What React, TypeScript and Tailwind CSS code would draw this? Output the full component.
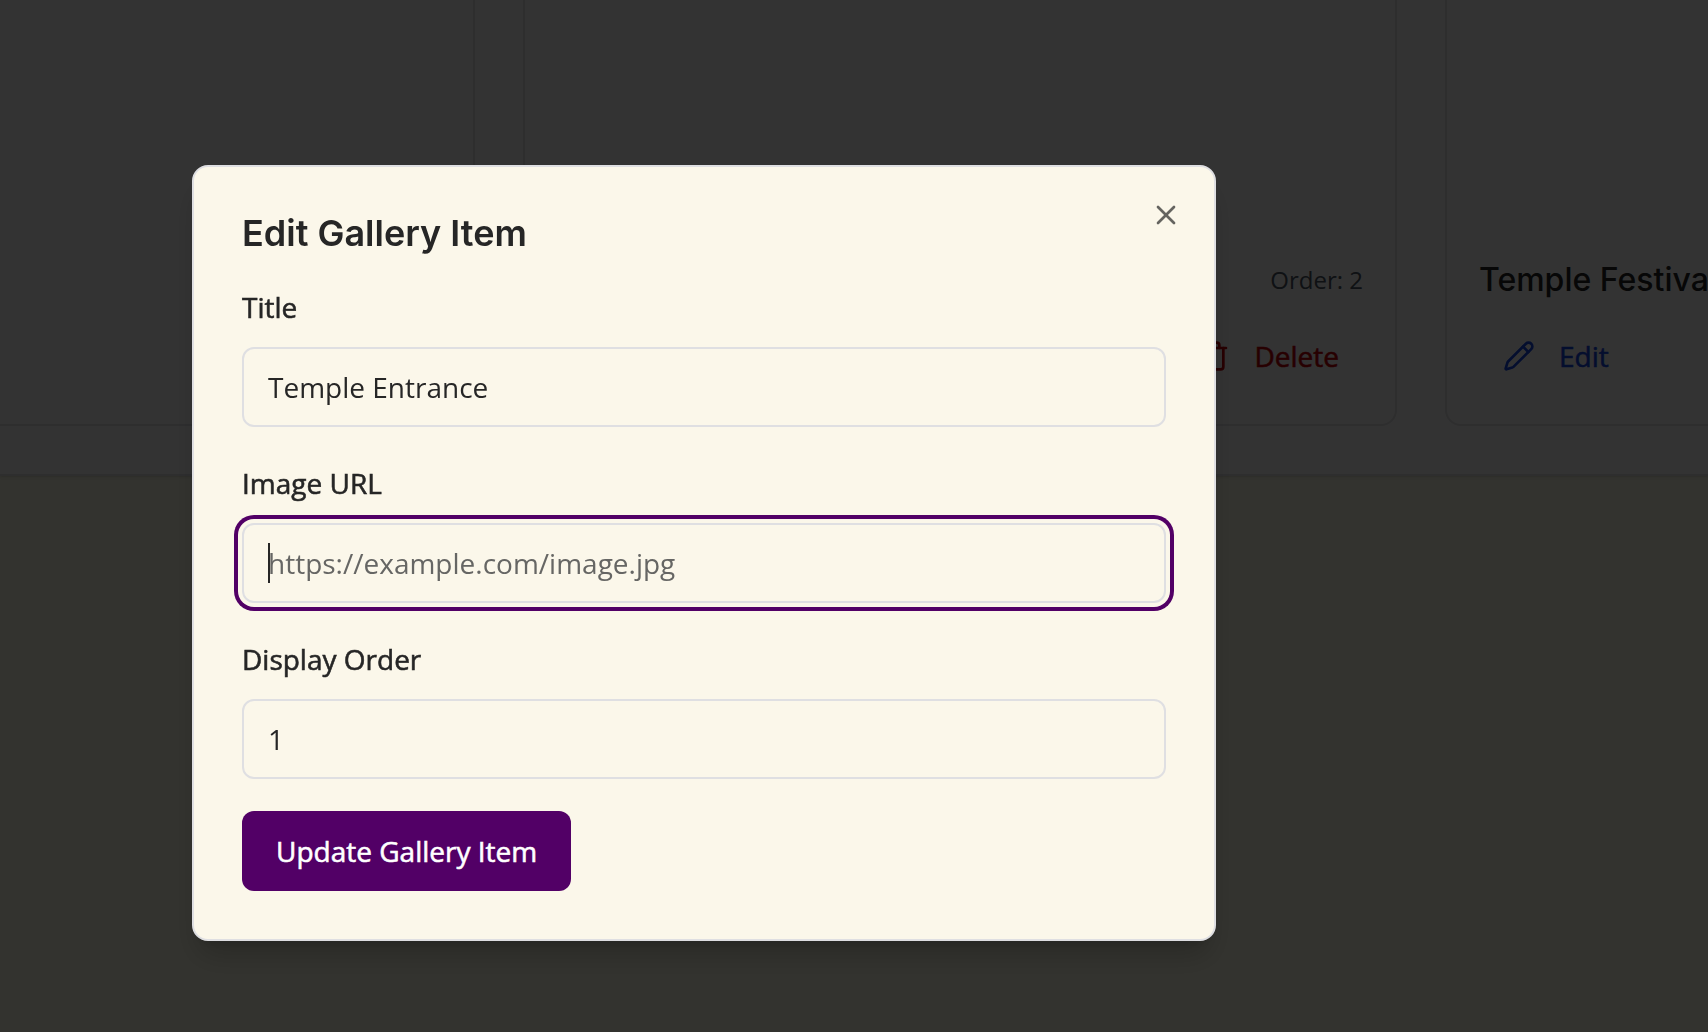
import { useState } from "react";
import { Pencil, Trash, X } from "lucide-react";

type GalleryItem = { title: string; order: number };

const items: GalleryItem[] = [
  { title: "Temple Entrance", order: 1 },
  { title: "Main Deity", order: 2 },
  { title: "Temple Festival", order: 3 },
];

const inputClass =
  "block h-20 w-full rounded-xl border-2 border-[#dfdfe2] bg-[#fbf7ea] px-6 text-[28px] leading-10 text-[#262626] placeholder:text-[#666664] outline-none focus:ring-4 focus:ring-[#520066] focus:ring-offset-4 focus:ring-offset-[#fbf7ea]";

const mediumText = "text-[28px] font-medium [-webkit-text-stroke:0.02em_currentColor]";

const labelClass = `flex h-12 items-center leading-7 ${mediumText}`;

const cardButtonClass = `flex h-[72px] items-center gap-6 rounded-xl px-6 ${mediumText}`;

function GalleryCard({ item }: { item: GalleryItem }) {
  return (
    <article className="min-w-0 overflow-hidden rounded-2xl border-2 border-[#e4e4e7] bg-white">
      <div className="h-[238px]" />
      <div className="p-8">
        <div className="mb-4 flex items-center justify-between">
          <h3 className="font-['Inter',sans-serif] text-[32px] leading-[48px] font-medium text-[#262626]">
            {item.title}
          </h3>
          <span className="text-[24px] leading-8 text-[#4b5563]">Order: {item.order}</span>
        </div>
        <div className="flex justify-between">
          <button type="button" className={`${cardButtonClass} text-blue-700`}>
            <Pencil size={32} />
            Edit
          </button>
          <button type="button" className={`${cardButtonClass} text-red-700`}>
            <Trash size={32} />
            Delete
          </button>
        </div>
      </div>
    </article>
  );
}

export default function App() {
  const [title, setTitle] = useState("Temple Entrance");
  const [url, setUrl] = useState("");
  const [order, setOrder] = useState("1");

  return (
    <div className="min-h-screen overflow-hidden bg-[#fcfce8] font-['Open_Sans',sans-serif] text-[#262626]">
      <section className="border-b-2 border-[#e4e4e7] bg-white pb-12 shadow-sm">
        <div className="-mt-4 -mr-[611px] -ml-[399px] grid grid-cols-3 gap-12">
          {items.map((item) => (
            <GalleryCard key={item.order} item={item} />
          ))}
        </div>
      </section>

      <div className="fixed inset-0 flex items-center justify-center bg-black/80 pt-[73px] pr-[300px]">
        <div
          role="dialog"
          aria-modal="true"
          aria-labelledby="dialog-title"
          className="relative w-full max-w-5xl rounded-2xl border-2 border-[#dfdfe2] bg-[#fbf7ea] p-12 shadow-[0_20px_30px_-6px_rgb(0_0_0/0.2),0_8px_12px_-8px_rgb(0_0_0/0.2)]"
        >
          <h2
            id="dialog-title"
            className="mb-8 font-['Inter',sans-serif] text-[36px] leading-9 font-semibold"
          >
            Edit Gallery Item
          </h2>
          <form className="flex flex-col gap-8" onSubmit={(e) => e.preventDefault()}>
            <div className="flex flex-col gap-4">
              <label htmlFor="title" className={labelClass}>
                Title
              </label>
              <input
                id="title"
                className={inputClass}
                value={title}
                onChange={(e) => setTitle(e.target.value)}
              />
            </div>
            <div className="flex flex-col gap-4">
              <label htmlFor="image-url" className={labelClass}>
                Image URL
              </label>
              <div className="relative">
                <input
                  id="image-url"
                  autoFocus
                  placeholder="https://example.com/image.jpg"
                  className={`${inputClass} ${url ? "" : "caret-transparent"}`}
                  value={url}
                  onChange={(e) => setUrl(e.target.value)}
                />
                {!url && (
                  <span
                    aria-hidden="true"
                    className="pointer-events-none absolute inset-y-5 left-[26px] w-0.5 bg-[#262626]"
                  />
                )}
              </div>
            </div>
            <div className="flex flex-col gap-4">
              <label htmlFor="order" className={labelClass}>
                Display Order
              </label>
              <input
                id="order"
                inputMode="numeric"
                className={inputClass}
                value={order}
                onChange={(e) => setOrder(e.target.value)}
              />
            </div>
            <button
              type="submit"
              className={`h-20 self-start rounded-xl bg-[#520066] px-[34px] text-white ${mediumText}`}
            >
              Update Gallery Item
            </button>
          </form>
          <button
            type="button"
            aria-label="Close"
            className="absolute top-8 right-8 opacity-70"
          >
            <X size={32} />
          </button>
        </div>
      </div>
    </div>
  );
}
